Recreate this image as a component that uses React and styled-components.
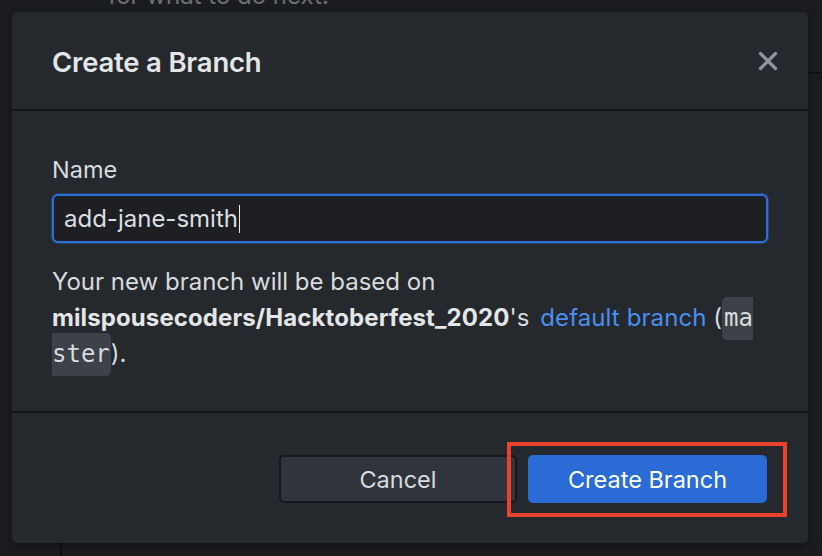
import React from "react";
import styled, { createGlobalStyle } from "styled-components";

const Global = createGlobalStyle`
  html, body { margin: 0; padding: 0; }
  body {
    width: 822px;
    height: 556px;
    overflow: hidden;
    background: #1a1c1f;
    font-family: Inter, "Noto Sans", sans-serif;
  }
  #root { height: 556px; }
`;

const Page = styled.div`
  position: relative;
  width: 822px;
  height: 556px;
  background: #1a1c1f;
  overflow: hidden;
`;

const BackdropText = styled.div`
  margin: -17px 0 0 108px;
  font-size: 24px;
  line-height: 26px;
  color: #6b7078;
`;

const BackdropRule = styled.div`
  margin: 63px 0 0 808px;
  height: 2px;
  background: #0f1012;
`;

const BackdropColumn = styled.div`
  margin: 0 0 0 60px;
  height: 600px;
  border-left: 2px solid #0f1012;
`;

const Overlay = styled.div`
  position: absolute;
  inset: 0;
  padding: 12px 14px 13px 12px;
  display: flex;
`;

const Dialog = styled.div`
  flex: 1;
  display: flex;
  flex-direction: column;
  background: #25282d;
  border-radius: 5px;
  box-shadow: 0 2px 10px rgba(0, 0, 0, 0.35);
  color: #d9dbde;
`;

const Header = styled.div`
  height: 97px;
  display: flex;
  align-items: center;
  justify-content: space-between;
  padding: 0 28px 0 40px;
  border-bottom: 2px solid #141518;
`;

const Title = styled.h1`
  margin: 0;
  font-size: 27.5px;
  font-weight: 600;
  color: #e4e5e7;
  letter-spacing: -0.2px;
  padding-top: 2px;
`;

const Close = styled.button`
  background: none;
  border: none;
  padding: 0;
  width: 24px;
  height: 24px;
  display: flex;
  align-items: center;
  justify-content: center;
  cursor: pointer;
`;

const Body = styled.div`
  height: 302px;
  padding: 45px 40px 0 40px;
  box-sizing: border-box;
  border-bottom: 2px solid #141518;
`;

const Label = styled.label`
  display: block;
  font-size: 23.5px;
  line-height: 28px;
  color: #d9dbde;
  margin-bottom: 10px;
`;

const InputBox = styled.div`
  height: 49px;
  box-sizing: border-box;
  border: 2px solid #2d6fd8;
  border-radius: 6px;
  background: #1d1f23;
  box-shadow: 0 0 0 1px rgba(45, 111, 216, 0.35);
  display: flex;
  align-items: center;
  padding: 0 10px;
  font-size: 24px;
  color: #dcdee1;
`;

const Caret = styled.span`
  display: inline-block;
  width: 1.5px;
  height: 28px;
  background: #e8e9eb;
  margin-left: 1px;
`;

const Info = styled.p`
  margin: 21px 0 0 0;
  padding-right: 10px;
  font-size: 24px;
  line-height: 36px;
  color: #d9dbde;
`;

const Strong = styled.strong`
  font-weight: 700;
  color: #e4e5e7;
  letter-spacing: 0.1px;
`;

const Link = styled.a`
  color: #4a8ff0;
  text-decoration: none;
  margin-left: 4px;
  letter-spacing: 0.1px;
`;

const Code = styled.code`
  font-family: "DejaVu Sans Mono", "Liberation Mono", monospace;
  font-size: 24px;
  background: #3d4249;
  color: #d9dbde;
  border-radius: 5px;
  padding: 7px 1px 8px 2px;
  word-break: break-all;
`;

const Footer = styled.div`
  flex: 1;
  display: flex;
  justify-content: flex-end;
  align-items: flex-start;
  gap: 11px;
  padding: 42px 41px 0 0;
`;

const Button = styled.button`
  width: ${(p) => p.$w}px;
  height: 48px;
  box-sizing: border-box;
  border-radius: 5px;
  font-family: Inter, "Noto Sans", sans-serif;
  font-size: 23.5px;
  cursor: pointer;
  border: 2px solid ${(p) => (p.$primary ? "#2a6bd6" : "#16171a")};
  background: ${(p) => (p.$primary ? "#2a6bd6" : "#30343b")};
  color: ${(p) => (p.$primary ? "#ffffff" : "#d9dbde")};
  position: relative;
`;

const Highlight = styled.span`
  position: absolute;
  left: -23px;
  top: -15px;
  right: -22px;
  bottom: -16px;
  border: 4px solid #e8412c;
  pointer-events: none;
`;

export default function App() {
  return (
    <>
      <Global />
      <Page>
        <BackdropText>for what to do next.</BackdropText>
        <BackdropRule />
        <BackdropColumn />
        <Overlay>
          <Dialog>
            <Header>
              <Title>Create a Branch</Title>
              <Close aria-label="Close">
                <svg width="20" height="20" viewBox="0 0 20 20">
                  <path
                    d="M2.5 2.5 L17.5 17.5 M17.5 2.5 L2.5 17.5"
                    stroke="#8f959d"
                    strokeWidth="3.2"
                    strokeLinecap="round"
                  />
                </svg>
              </Close>
            </Header>
            <Body>
              <Label>Name</Label>
              <InputBox>
                add-jane-smith
                <Caret />
              </InputBox>
              <Info>
                Your new branch will be based on{" "}
                <Strong>milspousecoders/Hacktoberfest_2020</Strong>'s
                <Link> default branch</Link> (<Code>master</Code>).
              </Info>
            </Body>
            <Footer>
              <Button $w={238}>Cancel</Button>
              <Button $w={239} $primary>
                Create Branch
                <Highlight />
              </Button>
            </Footer>
          </Dialog>
        </Overlay>
      </Page>
    </>
  );
}
